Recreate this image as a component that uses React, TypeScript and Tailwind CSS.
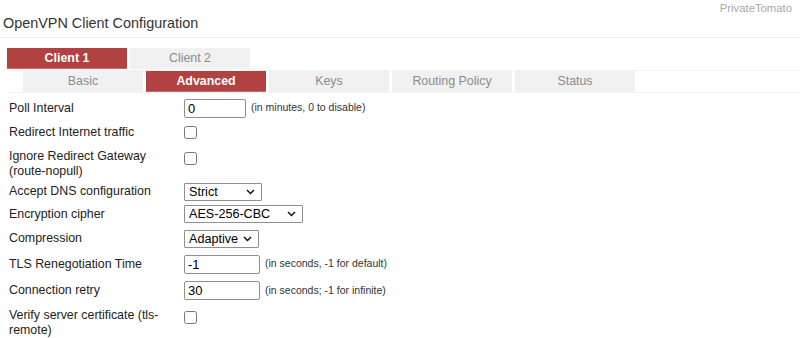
const font = "font-['Liberation_Sans',Arial,sans-serif]";

const clientTabs = [
  { name: "Client 1", active: true },
  { name: "Client 2", active: false },
];

const subTabs = [
  { name: "Basic", active: false },
  { name: "Advanced", active: true },
  { name: "Keys", active: false },
  { name: "Routing Policy", active: false },
  { name: "Status", active: false },
];

function Tab({ name, active }: { name: string; active: boolean }) {
  return (
    <div
      className={
        active
          ? "flex h-[21px] w-[120px] items-center justify-center border-b border-[#c86a6a] bg-[#b24141] text-[12.4px] font-bold text-white"
          : "flex h-[21px] w-[120px] items-center justify-center bg-[#f1f1f1] text-[12.4px] text-[#8c8c8c]"
      }
    >
      {name}
    </div>
  );
}

function Row({
  label,
  h,
  top,
  children,
}: {
  label: React.ReactNode;
  h: string;
  top?: boolean;
  children: React.ReactNode;
}) {
  return (
    <div className={`flex ${h} ${top ? "items-start" : "items-center"}`}>
      <div className={`w-[175px] leading-[15px] ${top ? "pt-[4px]" : ""}`}>{label}</div>
      <div className={`flex items-center gap-[5px] ${top ? "pt-[7px]" : ""}`}>{children}</div>
    </div>
  );
}

function TextBox({ value, w }: { value: string; w: string }) {
  return (
    <input
      readOnly
      value={value}
      className={`${w} h-[19px] rounded-[2px] border border-[#8f8f8f] bg-white px-[3px] text-[13px] leading-[17px] text-black outline-none`}
    />
  );
}

function Check() {
  return <input type="checkbox" className="m-0 h-[13px] w-[13px]" />;
}

function Pick({ value, w }: { value: string; w: string }) {
  return (
    <div className={`relative ${w} h-[18px]`}>
      <select
        defaultValue={value}
        className="h-full w-full appearance-none rounded-[1px] border border-[#8f8f8f] bg-white pl-[4px] text-[12.6px] leading-[16px] text-black"
      >
        <option>{value}</option>
      </select>
      <svg
        className="pointer-events-none absolute right-[7px] top-[6px]"
        width="9"
        height="6"
        viewBox="0 0 9 6"
        fill="none"
      >
        <path d="M1 1l3.5 3.5L8 1" stroke="#111" strokeWidth="1.5" />
      </svg>
    </div>
  );
}

function Hint({ children }: { children: React.ReactNode }) {
  return <span className="text-[10.5px] text-[#333]">{children}</span>;
}

export default function App() {
  return (
    <div className={`h-[338px] w-[800px] overflow-hidden bg-white text-[#222] ${font}`}>
      <div className="flex h-[38px] items-start justify-between border-b border-[#eeeeee] pl-[3px]">
        <h1 className="mt-[14px] text-[14.4px] leading-[18px] text-[#333]">OpenVPN Client Configuration</h1>
        <span className="mr-[8px] mt-[1px] text-[11.3px] leading-[14px] text-[#a8a8a8]">PrivateTomato</span>
      </div>

      <div className="mt-[10px] flex gap-[3px] pl-[7px]">
        {clientTabs.map((t) => (
          <Tab key={t.name} {...t} />
        ))}
      </div>

      <div className="ml-[7px] mt-[1px] flex gap-[3px] border-y border-[#f2f2f2] pl-[16px]">
        {subTabs.map((t) => (
          <Tab key={t.name} {...t} />
        ))}
      </div>

      <div className="mt-[3px] pl-[9px] text-[12.4px]">
        <Row label="Poll Interval" h="h-[24px]">
          <TextBox value="0" w="w-[62px]" />
          <Hint>(in minutes, 0 to disable)</Hint>
        </Row>
        <Row label="Redirect Internet traffic" h="h-[25px]">
          <Check />
        </Row>
        <Row
          label={
            <>
              Ignore Redirect Gateway
              <br />
              (route-nopull)
            </>
          }
          h="h-[36px]"
          top
        >
          <Check />
        </Row>
        <Row label="Accept DNS configuration" h="h-[21px]">
          <Pick value="Strict" w="w-[78px]" />
        </Row>
        <Row label="Encryption cipher" h="h-[24px]">
          <Pick value="AES-256-CBC" w="w-[119px]" />
        </Row>
        <Row label="Compression" h="h-[25px]">
          <Pick value="Adaptive" w="w-[75px]" />
        </Row>
        <Row label="TLS Renegotiation Time" h="h-[26px]">
          <TextBox value="-1" w="w-[76px]" />
          <Hint>(in seconds, -1 for default)</Hint>
        </Row>
        <Row label="Connection retry" h="h-[27px]">
          <TextBox value="30" w="w-[76px]" />
          <Hint>(in seconds; -1 for infinite)</Hint>
        </Row>
        <Row
          label={
            <>
              Verify server certificate (tls-
              <br />
              remote)
            </>
          }
          h="h-[36px]"
          top
        >
          <Check />
        </Row>
      </div>
    </div>
  );
}
